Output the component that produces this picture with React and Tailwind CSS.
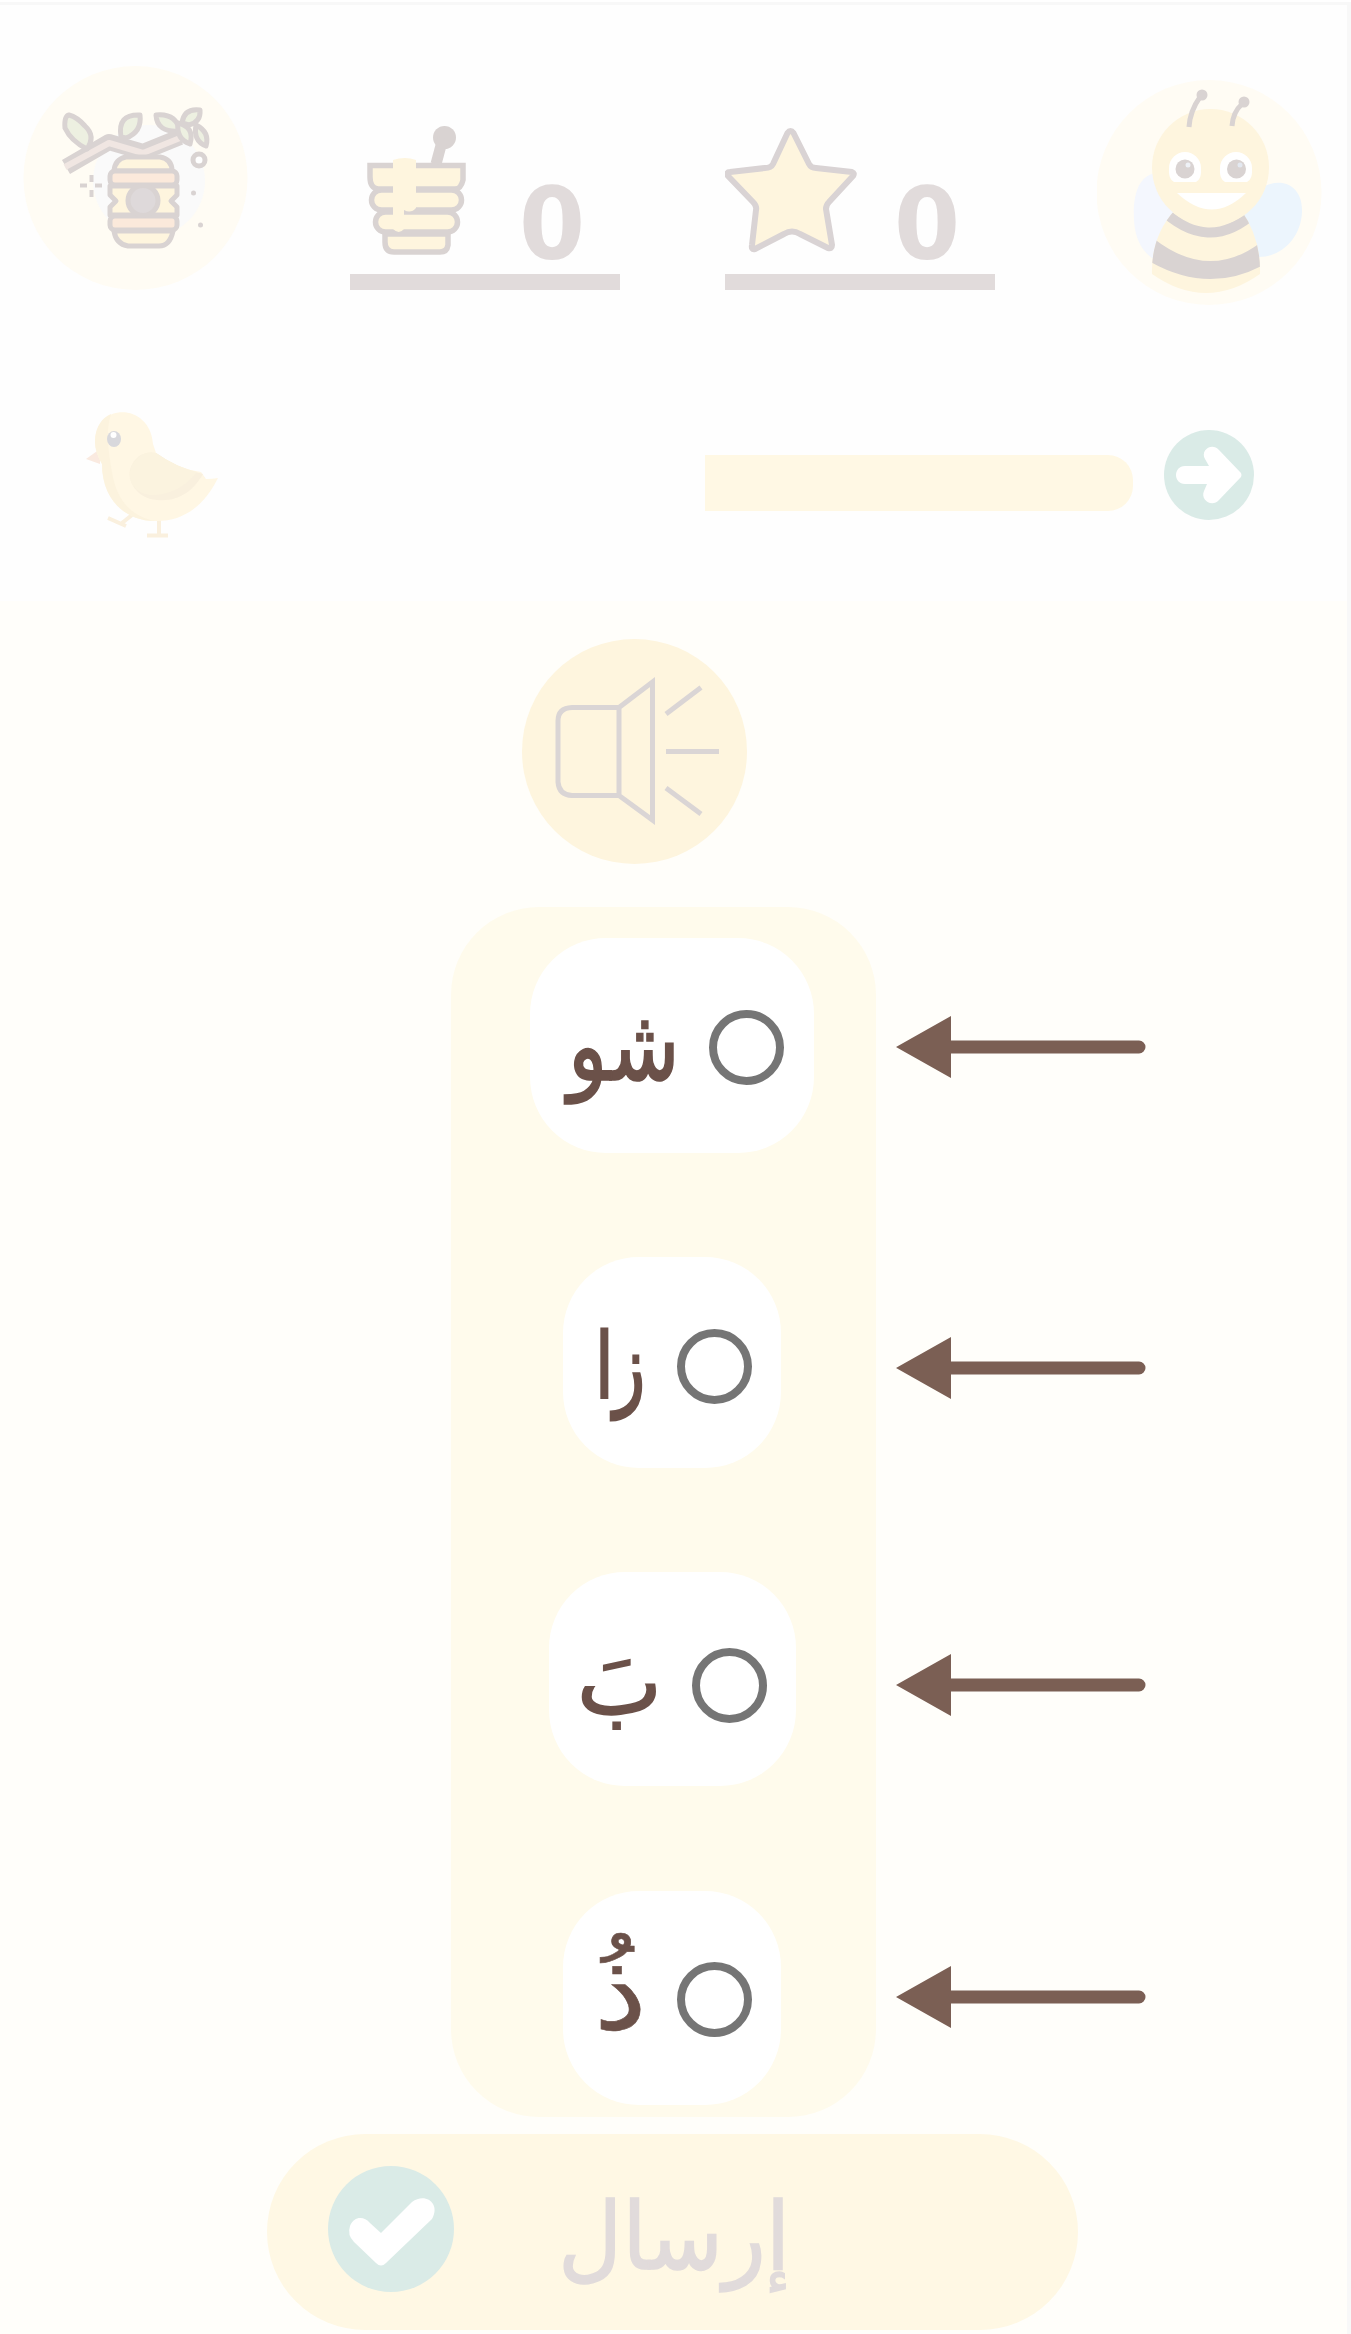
import React from "react";

const OPTIONS = [
  { text: "شو", card: "mt-[31px] w-[284px] h-[215px] ml-[79px]", radio: "mr-[30px] mt-[4px]", label: "mr-[32px] w-[112px] translate-x-[3px] scale-x-[0.9] scale-y-[1.09] [-webkit-text-stroke:1.5px_#6b5149]" },
  { text: "زا", card: "mt-[104px] w-[218px] h-[211px] ml-[112px]", radio: "mr-[29px] mt-[8px]", label: "mr-[32px] w-[46px] translate-y-[5px] scale-x-[0.71] scale-y-[0.98] [-webkit-text-stroke:3px_#6b5149]" },
  { text: "بَ", card: "mt-[104px] w-[247px] h-[214px] ml-[98px]", radio: "mr-[29px] mt-[13px]", label: "mr-[32px] w-[78px] translate-x-[2px] translate-y-[5px] scale-x-[0.98] scale-y-[0.97] [-webkit-text-stroke:2px_#6b5149]" },
  { text: "ذُ", card: "mt-[105px] w-[218px] h-[214px] ml-[112px]", radio: "mr-[29px] mt-[3px]", label: "mr-[32px] w-[46px] translate-x-[2px] -translate-y-[5px] scale-x-[1.3] scale-y-[1.16] [-webkit-text-stroke:0.5px_#6b5149]" },
];

const ARROWS = ["mt-[109px]", "mt-[259px]", "mt-[255px]", "mt-[250px]"];

function Hive() {
  return (
    <svg viewBox="0 0 270 270" className="h-[270px] w-[270px]" fill="none" stroke="#d9d3d2" strokeWidth="5" strokeLinejoin="round">
      <ellipse cx="135.500" cy="138" rx="112" ry="112" fill="#fffcf4" stroke="none" />
      <circle cx="149" cy="141" r="56" fill="#fafafa" stroke="none" />
      <path d="M66 127 L109 102 L143 112 L180 97" stroke="#d9d3d2" strokeWidth="16" />
      <path d="M65 127 L109 103 L143 113 L180 98" stroke="#f0e6e2" strokeWidth="6" />
      <g fill="#edf0e1">
        <path d="M69 75 Q64 76 65 88 Q71 101 87 109 Q96 96 85 86 Q77 77 69 75Z" />
        <path d="M121 97 Q117 74 140 75 Q142 92 126 98Z" />
        <path d="M156 75 Q176 73 180 91 Q157 93 156 75Z" />
        <path d="M182 83 Q184 68 200 70 Q201 82 189 85Z" />
        <path d="M178 83 Q195 87 190 104 Q176 99 178 83Z" />
        <path d="M196 85 Q210 92 206 106 Q193 101 196 85Z" />
      </g>
      <path d="M126 117 H160 Q172 119 172 131 H114 Q115 119 126 117Z" fill="#fef5de" />
      <rect x="110" y="131" width="67" height="14" rx="5" fill="#fbe9db" />
      <path d="M110 146 H177 V155 L171 161 L177 167 V175 H110 V167 L116 161 L110 155Z" fill="#fef5de" />
      <rect x="110" y="176" width="67" height="14" rx="5" fill="#fbe9db" />
      <path d="M114 191 H173 Q170 206 159 206 H128 Q116 204 114 191Z" fill="#fef5de" />
      <circle cx="143" cy="160.500" r="15" fill="#ded9da" />
      <circle cx="199" cy="120" r="6" fill="#fff" />
      <path d="M80 145.500h7 M95 145.500h7 M91.500 135v7 M91.500 150v7" strokeWidth="4" />
      <circle cx="193.500" cy="153" r="2.500" fill="#d9d3d2" stroke="none" />
      <circle cx="200.500" cy="185" r="2.500" fill="#d9d3d2" stroke="none" />
    </svg>
  );
}

function Honey() {
  return (
    <svg viewBox="0 0 110 135" className="h-[135px] w-[110px]">
      <g fill="#fef5de" stroke="#d9d3d2" strokeWidth="5.500">
        <path d="M9 39.500 H102 V54 Q100 63 94 63 H17 Q9 62 9 51Z" />
        <rect x="10.500" y="64" width="90" height="20" rx="10" />
        <rect x="14.500" y="86" width="82" height="20" rx="10" />
        <path d="M24 108 H87 V119 Q86 126 79 126 H33 Q24 126 24 116Z" />
      </g>
      <circle cx="83.500" cy="11.500" r="11.500" fill="#d9d3d2" />
      <path d="M82 12 L75 38" stroke="#d9d3d2" strokeWidth="11" />
      <path d="M32 34 Q44 30 55 34 V82 Q50 88 43 84 V103 Q38 109 32 103Z" fill="#fef5de" />
    </svg>
  );
}

function Star() {
  return (
    <svg viewBox="0 0 134 130" className="h-[130px] w-[134px]">
      <path
        d="M62.500 7 Q65.500 3 68.500 7 L84 38 Q86 42 91 42 L127 46 Q130 47 128 50 L104 76 Q101 79 101 83 L107 119 Q107 123 103 122 L75 108 Q67 103 59 108 L30 123 Q26 124 27 119 L31 84 Q32 80 28 76 L3 50 Q1 46 5 46 L40 42 Q46 42 48 38Z"
        fill="#fef5de"
        stroke="#d9d3d4"
        strokeWidth="6"
        strokeLinejoin="round"
      />
    </svg>
  );
}

function Bee() {
  return (
    <svg viewBox="0 0 225 225" className="h-[225px] w-[225px]">
      <circle cx="112" cy="112.500" r="112.500" fill="#fffcf4" />
      <path d="M59 93 C38 96 36 123 37 140 C38 162 48 175 60 181 L80 130Z" fill="#f4f7fe" />
      <path d="M168 106 C187 97 206 107 205 132 C204 158 184 178 160 177 L142 130Z" fill="#ecf5fd" />
      <clipPath id="beeBody">
        <path d="M78 130 Q54 156 55 194 Q109 232 163 194 Q164 158 144 130Z" />
      </clipPath>
      <g clipPath="url(#beeBody)">
        <path d="M40 120 H180 V225 H40Z" fill="#fef5de" />
        <path d="M62 127 Q111 176 159 131" fill="none" stroke="#d9d3d2" strokeWidth="10" />
        <path d="M50 153 Q111 206 168 159 V184 Q111 216 50 180Z" fill="#d9d3d2" />
      </g>
      <ellipse cx="113.500" cy="87.500" rx="58.500" ry="58.500" fill="#fef5de" />
      <g fill="none" stroke="#d9d3d2" strokeWidth="5">
        <path d="M92 47 Q93 31 103 17" />
        <path d="M135 46 Q136 32 145 24" />
      </g>
      <circle cx="105" cy="15" r="5.500" fill="#d9d3d2" />
      <circle cx="147" cy="22" r="5.500" fill="#d9d3d2" />
      <path d="M77 102 Q71 99 72 88 A16 16 0 0 1 104 88 Q105 99 99 102Z" fill="#fff" />
      <path d="M128 102 Q122 99 123 88 A16 16 0 0 1 155 88 Q156 99 150 102Z" fill="#fff" />
      <circle cx="88" cy="89" r="9.500" fill="#d9d3d2" />
      <circle cx="139.500" cy="89" r="9.500" fill="#d9d3d2" />
      <circle cx="91" cy="85" r="2.500" fill="#eef1f6" />
      <circle cx="143" cy="85" r="2.500" fill="#e3e8f0" />
      <path d="M80 113 H149 Q115 146 80 113Z" fill="#fff" />
    </svg>
  );
}

function Chick() {
  return (
    <svg viewBox="0 0 134 128" className="h-[128px] w-[134px]">
      <path d="M14 37 L0 47 L14 52Z" fill="#faeae0" />
      <path d="M46 103 L36 111 M22 106 L40 114 M73 108 V122 M61 123.500 H82" stroke="#faf0de" strokeWidth="4" fill="none" />
      <path d="M9 30 C9 -10 64 -10 67 32 L70 41 Q92 57 115 60 L120 67 Q127 67 132 66 C116 98 93 110 69 109 C39 109 16 87 16 52 Q9 40 9 30Z" fill="#fff7e4" />
      <path d="M9 30 C9 14 17 5 25 2 C19 20 23 45 27 65 C32 90 47 105 69 109 C39 109 16 87 16 52 Q9 40 9 30Z" fill="#fcf3de" />
      <path d="M70 41 Q92 57 117 62 C107 79 93 90 71 88 C50 87 40 67 45 55 Q53 38 70 41Z" fill="#f9f0de" />
      <path d="M70 41 Q90 55 111 60 C99 76 80 84 64 83 C45 80 41 65 45 55 Q53 38 70 41Z" fill="#fbf3df" />
      <ellipse cx="28" cy="27" rx="7" ry="8" fill="#d8d8dc" />
      <circle cx="27.500" cy="23" r="3" fill="#fff" />
    </svg>
  );
}

function NextIcon() {
  return (
    <svg viewBox="0 0 90 90" className="h-[90px] w-[90px]">
      <circle cx="45" cy="45" r="45" fill="#daebe7" />
      <path d="M21 36 H45 L41 29 C36 20 48 12 55 20 L77 43 Q78 45 77 47 L55 70 C48 78 36 70 40 61 L43 54 H21 C9 54 9 36 21 36Z" fill="#fff" />
    </svg>
  );
}

function Speaker() {
  return (
    <svg viewBox="0 0 225 225" className="h-[225px] w-[225px]">
      <circle cx="112.500" cy="112.500" r="112.500" fill="#fef5de" />
      <path d="M97 68.500 H50 Q36 69 36 82 V143 Q37 156 50 156.500 H97Z M97 68.500 L130.500 43 V181 L97 156.500 M144 75 L179 48.500 M144 112.500 H197 M144 149 L179 175" fill="none" stroke="#dad5d5" strokeWidth="5" />
    </svg>
  );
}

function CheckIcon() {
  return (
    <svg viewBox="0 0 126 126" className="h-[126px] w-[126px]">
      <circle cx="63" cy="63" r="63" fill="#daebe7" />
      <path d="M22 60 C26 50 36 50 42 57 L53 67 L84 36 C97 26 113 37 104 53 L58 97 Q53 102 48 97 L26 76 Q19 69 22 60Z" fill="#fff" />
    </svg>
  );
}

function Counter({ icon, value, className }) {
  return (
    <div className={className}>
      <div className="flex h-[147px] items-start">
        {icon}
        <span className="mt-[49px] ml-auto mr-[39px] flex w-[58px] scale-x-[0.96] justify-center font-['DejaVu_Sans',sans-serif] text-[99px] leading-[99px] font-bold text-[#e1dbdb]">
          {value}
        </span>
      </div>
      <div className="mt-px h-[16px] bg-[#e1dbdb]" />
    </div>
  );
}

export default function App() {
  return (
    <div className="h-[2334px] w-[1351px] overflow-hidden border-t-[2px] border-white bg-[#fffefa] font-['DejaVu_Sans',sans-serif]">
      <div className="h-[2332px] border-t-[3px] border-r-4 border-[#f8f8f8]">
        <header className="h-[596px] bg-[#fefefe]">
          <div className="flex h-[345px] items-start">
            <div className="mt-[35px]">
              <Hive />
            </div>
            <Counter className="mt-[121px] ml-[80px] w-[270px]" value="0" icon={<div className="ml-[11px]"><Honey /></div>} />
            <Counter className="mt-[121px] ml-[105px] w-[270px]" value="0" icon={<Star />} />
            <div className="mt-[75px] ml-[102px]">
              <Bee />
            </div>
          </div>
          <div className="flex items-start pl-[86px]">
            <div className="mt-[62px]">
              <Chick />
            </div>
            <div className="mt-[105px] ml-[485px] h-[56px] w-[428px] rounded-r-[25px] bg-[#fff8e4]" />
            <div className="mt-[80px] ml-[31px]">
              <NextIcon />
            </div>
          </div>
        </header>
        <main>
          <div className="mt-[38px] ml-[522px] h-[225px]">
            <Speaker />
          </div>
          <div className="mt-[43px] flex items-start">
            <div className="ml-[451px] flex h-[1210px] w-[425px] flex-col rounded-[88px] bg-[#fffbec]">
              {OPTIONS.map((o) => (
                <div key={o.text} dir="rtl" className={"flex shrink-0 items-center rounded-[76px] bg-white " + o.card}>
                  <span className={"h-[75px] w-[75px] shrink-0 rounded-full border-8 border-[#757575] " + o.radio} />
                  <span className={"origin-right text-[92px] leading-[150px] whitespace-nowrap text-[#6b5149] " + o.label}>{o.text}</span>
                </div>
              ))}
            </div>
            <div className="ml-[20px] flex flex-col">
              {ARROWS.map((m) => (
                <svg key={m} viewBox="0 0 250 62" className={"h-[62px] w-[250px] " + m} fill="#7b5f54">
                  <path d="M0 31 L55 0 V24.500 H243 A6.500 6.500 0 0 1 243 37.500 H55 V62Z" />
                </svg>
              ))}
            </div>
          </div>
          <div className="mt-[17px] ml-[267px] flex h-[196px] w-[811px] items-start rounded-[98px] bg-[#fff8e4]">
            <div className="mt-[32px] ml-[61px]">
              <CheckIcon />
            </div>
            <span dir="rtl" className="mt-[28px] ml-[104px] origin-left scale-x-[0.94] text-[94px] leading-[150px] whitespace-nowrap text-[#e1dbdb] [-webkit-text-stroke:1.5px_#e1dbdb]">إرسال</span>
          </div>
        </main>
      </div>
    </div>
  );
}
